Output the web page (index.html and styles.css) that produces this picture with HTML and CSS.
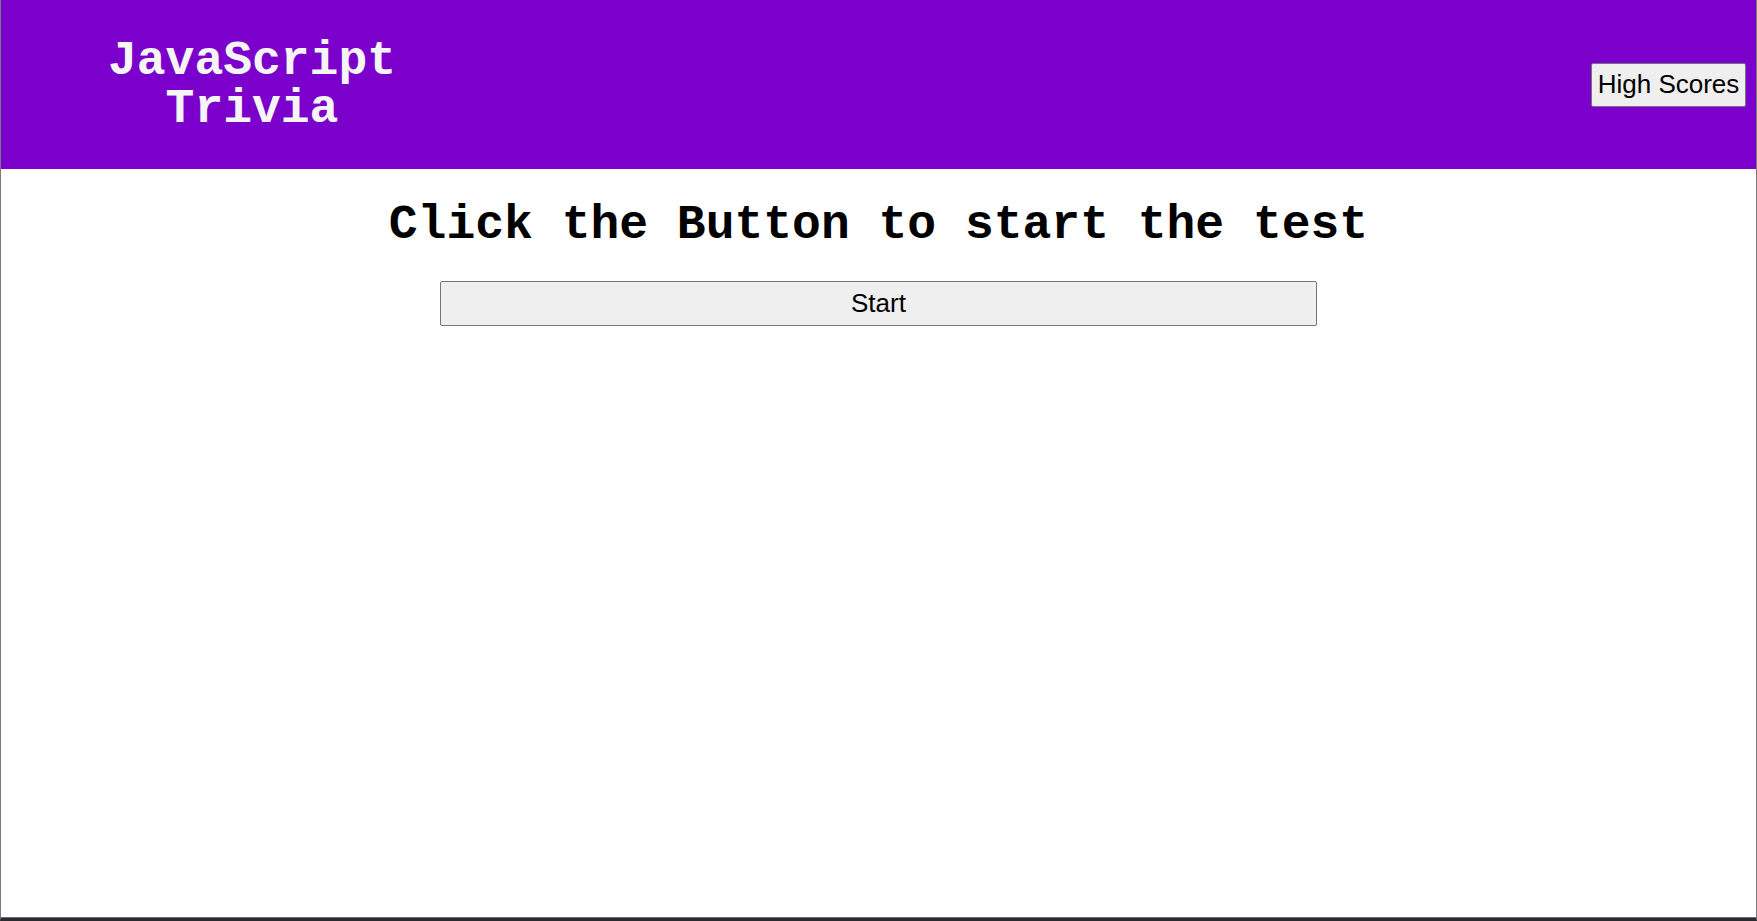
FILE: index.html
```html
<!DOCTYPE html>
<html lang="en">
<head>
<meta charset="utf-8">
<title>JavaScript Trivia</title>
<link rel="stylesheet" href="styles.css">
</head>
<body>
<div class="frame">
  <header class="topbar">
    <h1 class="brand">JavaScript<br>Trivia</h1>
    <button class="scores-btn">High Scores</button>
  </header>
  <main class="content">
    <h2 class="prompt">Click the Button to start the test</h2>
    <button class="start-btn">Start</button>
  </main>
</div>
</body>
</html>
```
FILE: styles.css
```css
html, body {
  margin: 0;
  padding: 0;
  height: 100%;
  background: #ffffff;
}
body {
  font-family: "Liberation Sans", Arial, sans-serif;
}
.frame {
  box-sizing: border-box;
  height: 921px;
  display: flex;
  flex-direction: column;
  border-left: 1px solid #7a7a7a;
  border-right: 1px solid #7a7a7a;
  border-bottom: 3px solid #2a2b2e;
  box-shadow: inset 0 -1px 0 #6e6e6e;
}
.topbar {
  height: 169px;
  flex: 0 0 169px;
  background: #7b00cc;
  display: flex;
  align-items: center;
  justify-content: space-between;
}
.brand {
  width: 502px;
  margin: 0;
  padding: 0;
  text-align: center;
  font-family: "Liberation Mono", "Courier New", monospace;
  font-weight: bold;
  font-size: 48px;
  line-height: 48px;
  color: #f5f5f5;
}
.scores-btn {
  margin-right: 10px;
  height: 44px;
  width: 155px;
  padding: 0;
  font-family: "Liberation Sans", Arial, sans-serif;
  font-size: 26px;
  color: #000;
  background: #efefef;
  border: 1px solid #767676;
  border-radius: 2px;
}
.content {
  flex: 1;
  display: flex;
  flex-direction: column;
  align-items: center;
}
.prompt {
  margin: 30px 0 0;
  font-family: "Liberation Mono", "Courier New", monospace;
  font-weight: bold;
  font-size: 48px;
  line-height: 52px;
  color: #000;
}
.start-btn {
  margin-top: 30px;
  width: 50%;
  height: 45px;
  padding: 0;
  font-family: "Liberation Sans", Arial, sans-serif;
  font-size: 26px;
  color: #000;
  background: #efefef;
  border: 1px solid #767676;
  border-radius: 2px;
}
```
